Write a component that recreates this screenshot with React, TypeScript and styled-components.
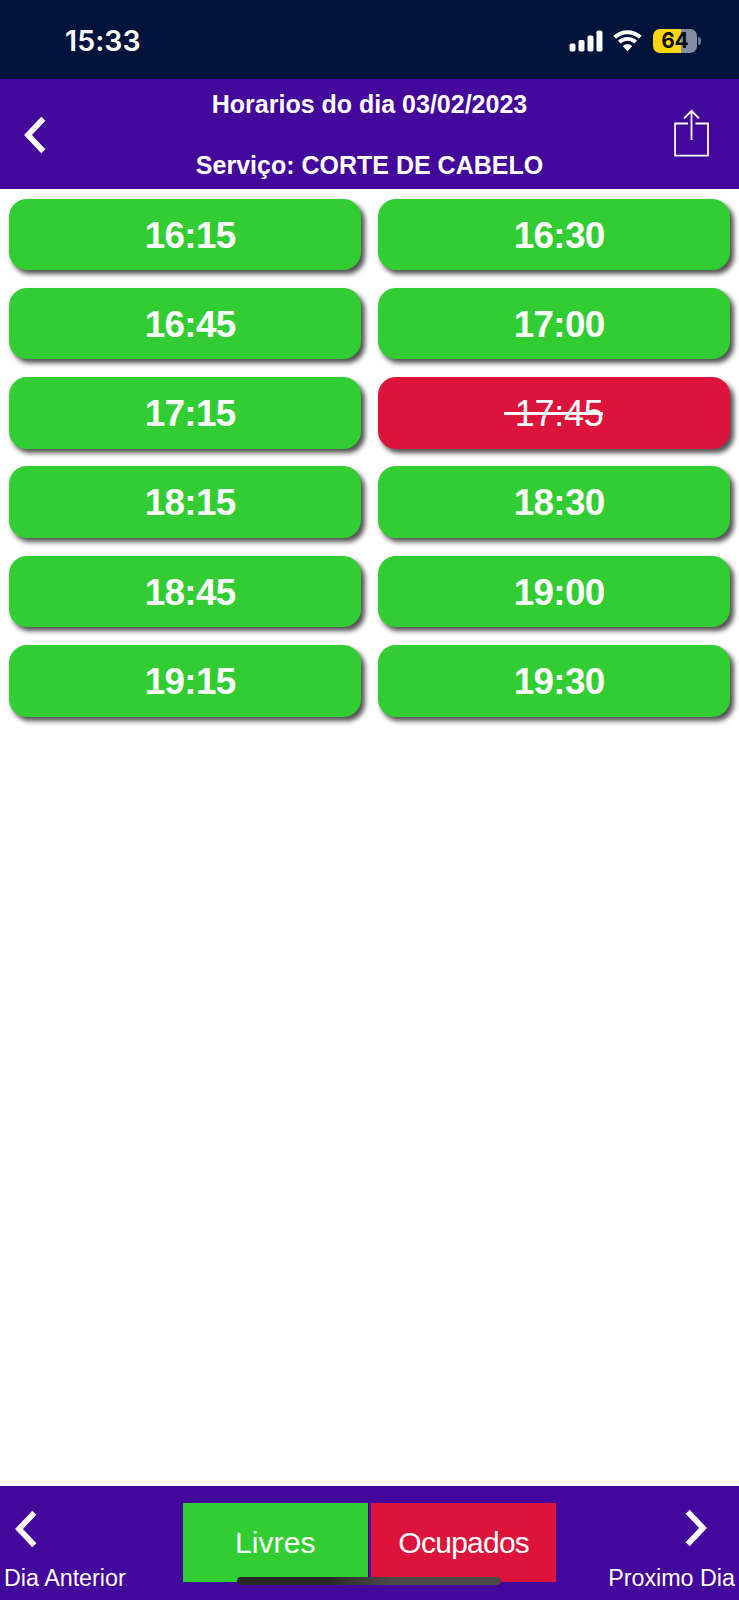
import React from 'react';
import styled, { createGlobalStyle } from 'styled-components';

const GlobalStyle = createGlobalStyle`
  * { box-sizing: border-box; }
  body { margin: 0; background: #fff; }
  button { border: 0; padding: 0; background: none; color: inherit; font: inherit; cursor: pointer; }
  svg { display: block; }
`;

const Screen = styled.div`
  width: 739px;
  height: 1600px;
  display: flex;
  flex-direction: column;
  position: relative;
  overflow: hidden;
  background: #fff;
  color: #fff;
  font-family: 'Liberation Sans', Arial, sans-serif;
`;

const StatusBar = styled.div`
  height: 79px;
  flex: none;
  display: flex;
  align-items: center;
  justify-content: space-between;
  padding: 2px 38.5px 0 65px;
  background: #00133a;
`;

const Clock = styled.span`
  font: 600 28.5px/36px Inter, sans-serif;
  letter-spacing: 0.1px;
`;

const StatusIcons = styled.div`
  display: flex;
  align-items: center;
`;

const SignalIcon = styled.svg`
  margin-right: 10.5px;
`;

const WifiIcon = styled.svg`
  margin-right: 11px;
`;

const Battery = styled.div`
  width: 43.5px;
  height: 24px;
  border-radius: 7px;
  display: flex;
  align-items: center;
  justify-content: center;
  background: linear-gradient(90deg, #ffd60a 0 63%, #868ca3 63%);
  color: #0a0d14;
  font: 700 21px/24px Inter, sans-serif;
  letter-spacing: -0.3px;
`;

const BatteryCap = styled.span`
  width: 3px;
  height: 8px;
  margin-left: 1px;
  border-radius: 0 4px 4px 0;
  background: #6f7791;
`;

const Header = styled.header`
  height: 110px;
  flex: none;
  display: grid;
  grid-template-columns: 60px 1fr 60px;
  align-items: start;
  background: #43079b;
`;

const BackButton = styled.button`
  margin: 37px 0 0 24px;
  justify-self: start;
`;

const ShareButton = styled.button`
  margin: 30px 29px 0 0;
  justify-self: end;
`;

const Titles = styled.div`
  display: flex;
  flex-direction: column;
  align-items: center;
  gap: 32px;
  padding-top: 11px;
`;

const Title = styled.h1`
  margin: 0;
  font-size: 25px;
  line-height: 28.5px;
  font-weight: 700;
  white-space: nowrap;
`;

const Slots = styled.main`
  flex: 1;
  display: grid;
  grid-template-columns: 352px 352px;
  grid-auto-rows: 71.5px;
  gap: 17.8px 17px;
  align-content: start;
  padding: 9.6px 9.3px;
`;

const Slot = styled.button<{ $busy?: boolean }>`
  border-radius: 18px;
  background: ${(p) => (p.$busy ? '#dc143c' : '#32cd32')};
  box-shadow: 3.5px 4px 5px rgba(0, 0, 0, 0.68);
  font-size: ${(p) => (p.$busy ? 36 : 36.8)}px;
  letter-spacing: ${(p) => (p.$busy ? -0.3 : -0.65)}px;
  line-height: 71.5px;
  padding-top: 1px;
  font-weight: ${(p) => (p.$busy ? 400 : 700)};
  white-space: pre;
`;

const Struck = styled.s`
  display: inline-block;
  position: relative;
  line-height: 40px;
  text-decoration: none;

  &::after {
    content: '';
    position: absolute;
    left: -1px;
    right: 0;
    top: 17.5px;
    height: 3px;
    background: #fff;
  }
`;

const Footer = styled.footer`
  height: 114.5px;
  flex: none;
  display: flex;
  justify-content: space-between;
  padding: 0 4px;
  background: #43079b;
`;

const DayButton = styled.button<{ $end?: boolean }>`
  width: 150px;
  height: 106px;
  display: flex;
  flex-direction: column;
  justify-content: space-between;
  align-items: ${(p) => (p.$end ? 'flex-end' : 'flex-start')};
  padding-top: ${(p) => (p.$end ? 23.5 : 24.5)}px;
  font-size: 23.3px;
  line-height: 28px;
  white-space: nowrap;
`;

const DayArrow = styled.span<{ $end?: boolean }>`
  padding: ${(p) => (p.$end ? '0 28.5px 0 0' : '0 0 0 11px')};
`;

const Filters = styled.div`
  display: flex;
  gap: 3.5px;
  padding-top: 17.5px;
`;

const Filter = styled.button<{ $busy?: boolean }>`
  width: 185px;
  height: 79px;
  background: ${(p) => (p.$busy ? '#dc143c' : '#32cd32')};
  font-size: 30px;
  letter-spacing: ${(p) => (p.$busy ? -0.75 : 0.1)}px;
  line-height: 80px;
`;

const HomeIndicator = styled.div`
  position: absolute;
  left: 237px;
  bottom: 15px;
  width: 264px;
  height: 8px;
  border-radius: 4px;
  background: linear-gradient(90deg, #292929 0 35%, #4b4b4b 58%);
`;

const Chevron = ({ right = false }: { right?: boolean }) => (
  <svg width="22" height="38" viewBox="0 0 22 38" fill="none" stroke="#fff" strokeWidth="5.7">
    <path d={right ? 'M2.7 2.8 L18 19 L2.7 35.2' : 'M19.3 2.8 L4 19 L19.3 35.2'} />
  </svg>
);

const slots = [
  '16:15', '16:30', '16:45', '17:00', '17:15', '17:45',
  '18:15', '18:30', '18:45', '19:00', '19:15', '19:30',
];
const busySlots = ['17:45'];

export default function App() {
  return (
    <Screen>
      <GlobalStyle />
      <StatusBar>
        <Clock>15:33</Clock>
        <StatusIcons>
          <SignalIcon width="34" height="22" viewBox="0 0 34 22" fill="#fff">
            <rect x="0.5" y="13.5" width="6" height="8" rx="1.8" />
            <rect x="9.5" y="10" width="6" height="11.5" rx="1.8" />
            <rect x="18.5" y="5.5" width="6" height="16" rx="1.8" />
            <rect x="27.5" y="0.5" width="6" height="21" rx="1.8" />
          </SignalIcon>
          <WifiIcon width="29" height="22" viewBox="0 0 29 22" fill="none" stroke="#fff">
            <path d="M1.7 7.3 C8.7 0.5 20.3 0.5 27.3 7.3" strokeWidth="4" />
            <path d="M6.3 12 C10.8 7.8 18.2 7.8 22.7 12" strokeWidth="3.9" />
            <path d="M9.7 16.3 C12.3 13.7 16.7 13.7 19.3 16.3 L14.5 21.3 Z" fill="#fff" stroke="none" />
          </WifiIcon>
          <Battery>64</Battery>
          <BatteryCap />
        </StatusIcons>
      </StatusBar>
      <Header>
        <BackButton aria-label="Voltar"><Chevron /></BackButton>
        <Titles>
          <Title>Horarios do dia 03/02/2023</Title>
          <Title>Serviço: CORTE DE CABELO</Title>
        </Titles>
        <ShareButton aria-label="Compartilhar">
          <svg width="37" height="50" viewBox="0 0 37 50" fill="none" stroke="#fff" strokeWidth="1.8">
            <path d="M15 14.5 H2.1 V46.6 H35 V14.5 H22.5" />
            <path d="M18.5 31 V2 M11 9.3 L18.5 1.8 L26 9.3" />
          </svg>
        </ShareButton>
      </Header>
      <Slots>
        {slots.map((time) => {
          const busy = busySlots.includes(time);
          const label = '\u00a0' + time;
          return (
            <Slot key={time} $busy={busy}>
              {busy ? <Struck>{label}</Struck> : label}
            </Slot>
          );
        })}
      </Slots>
      <Footer>
        <DayButton>
          <DayArrow><Chevron /></DayArrow>
          Dia Anterior
        </DayButton>
        <Filters>
          <Filter>Livres</Filter>
          <Filter $busy>Ocupados</Filter>
        </Filters>
        <DayButton $end>
          <DayArrow $end><Chevron right /></DayArrow>
          Proximo Dia
        </DayButton>
      </Footer>
      <HomeIndicator />
    </Screen>
  );
}
